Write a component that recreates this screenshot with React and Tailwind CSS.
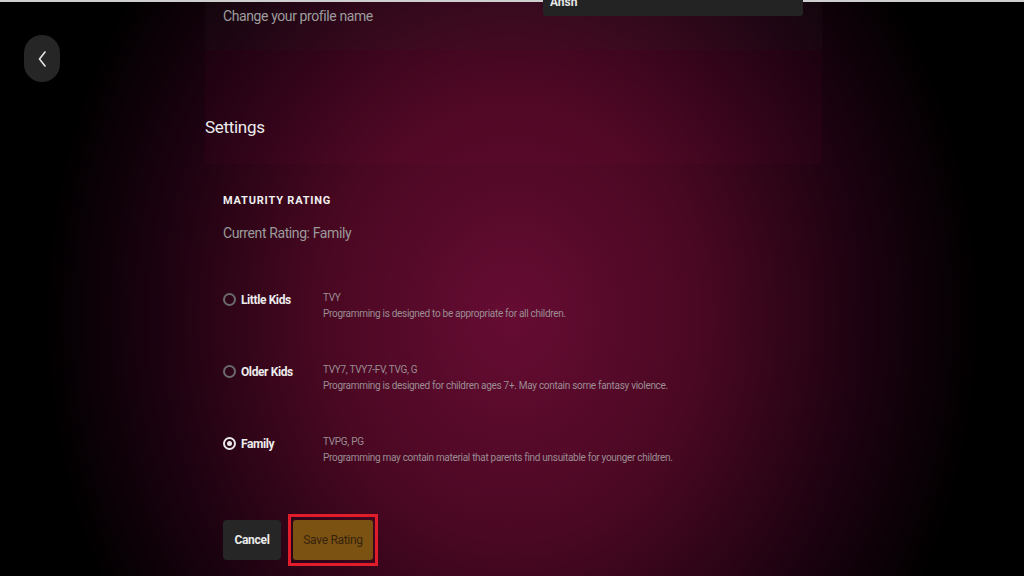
import React from 'react';

const ratings = [
  { id: 'little', label: 'Little Kids', codes: 'TVY', desc: 'Programming is designed to be appropriate for all children.' },
  { id: 'older', label: 'Older Kids', codes: 'TVY7, TVY7-FV, TVG, G', desc: 'Programming is designed for children ages 7+. May contain some fantasy violence.' },
  { id: 'family', label: 'Family', codes: 'TVPG, PG', desc: 'Programming may contain material that parents find unsuitable for younger children.' },
];

function Radio({ checked }) {
  return (
    <span className="flex h-[13px] w-[13px] shrink-0 items-center justify-center rounded-full border-2 border-[#6b6b6b] data-[on=true]:border-[#e8e8e8]" data-on={checked}>
      {checked && <span className="h-[5px] w-[5px] rounded-full bg-[#e8e8e8]" />}
    </span>
  );
}

export default function App() {
  return (
    <div
      className="relative h-[576px] w-[1024px] overflow-hidden bg-black bg-[radial-gradient(ellipse_470px_560px_at_50%_55%,#660c33_0%,#4a0822_40%,#1c0210_75%,#000_100%)] font-['Roboto',sans-serif] text-white"
    >
      <div className="h-[2px] bg-[#cfcfcf]" />

      {/* back button */}
      <button className="absolute left-[24px] top-[35px] flex h-[47px] w-[36px] items-center justify-center rounded-full bg-[#262626]">
        <svg width="10" height="18" viewBox="0 0 10 18" fill="none">
          <path d="M8 2 L2.5 9 L8 16" stroke="#e6e6e6" strokeWidth="1.6" strokeLinecap="round" strokeLinejoin="round" />
        </svg>
      </button>

      <div className="mx-auto w-[620px] pl-[3px]">
        {/* profile name row */}
        <div className="flex h-[48px] justify-between bg-white/[0.02] pl-[18px] pr-[19px]">
          <p className="mt-[4px] text-[14px] tracking-[-0.4px] text-[#9c9c9c]">Change your profile name</p>
          <div className="-mt-[2px] h-[16px] w-[260px] overflow-hidden rounded-b-[3px] bg-[#232323] px-[7px]">
            <p className="-mt-[5px] text-[12px] font-bold leading-[14px] text-[#e6e6e6]">Ansh</p>
          </div>
        </div>

        {/* settings band */}
        <div className="h-[114px] bg-[#ff2a7a]/[0.03] pt-[65px]">
          <h2 className="text-[17px] tracking-[-0.3px] text-[#ececec]">Settings</h2>
        </div>

        <div className="pl-[18px]">
          <h3 className="mt-[29px] text-[11px] font-bold tracking-[0.8px] text-[#f0f0f0]">MATURITY RATING</h3>
          <p className="mt-[13px] text-[14px] tracking-[-0.4px] text-[#9a9a9a]">Current Rating: Family</p>

          <div className="mt-[47px] flex flex-col gap-[49px]">
            {ratings.map((r) => (
              <div key={r.id} className="flex h-[23px]">
                <div className="flex w-[100px] items-start gap-[5px] pt-[2px]">
                  <Radio checked={r.id === 'family'} />
                  <span className="-mt-[2px] text-[12px] font-bold tracking-[-0.4px] text-[#ececec]">{r.label}</span>
                </div>
                <div className="-mt-[1px] text-[10px] leading-[16px] tracking-[-0.3px] text-[#9a8d93]">
                  <p>{r.codes}</p>
                  <p>{r.desc}</p>
                </div>
              </div>
            ))}
          </div>

          <div className="mt-[56px] flex items-center gap-[7px]">
            <button className="h-[40px] w-[58px] rounded-[4px] bg-[#262626] text-[12px] font-bold tracking-[-0.3px] text-[#ececec]">Cancel</button>
            <div className="flex h-[52px] w-[90px] items-center justify-center border-[3px] border-[#e11d2b]">
              <button className="h-[40px] w-[80px] rounded-[3px] bg-[#7c5213] text-[12px] tracking-[-0.3px] text-[#35240c]">Save Rating</button>
            </div>
          </div>
        </div>
      </div>
    </div>
  );
}
